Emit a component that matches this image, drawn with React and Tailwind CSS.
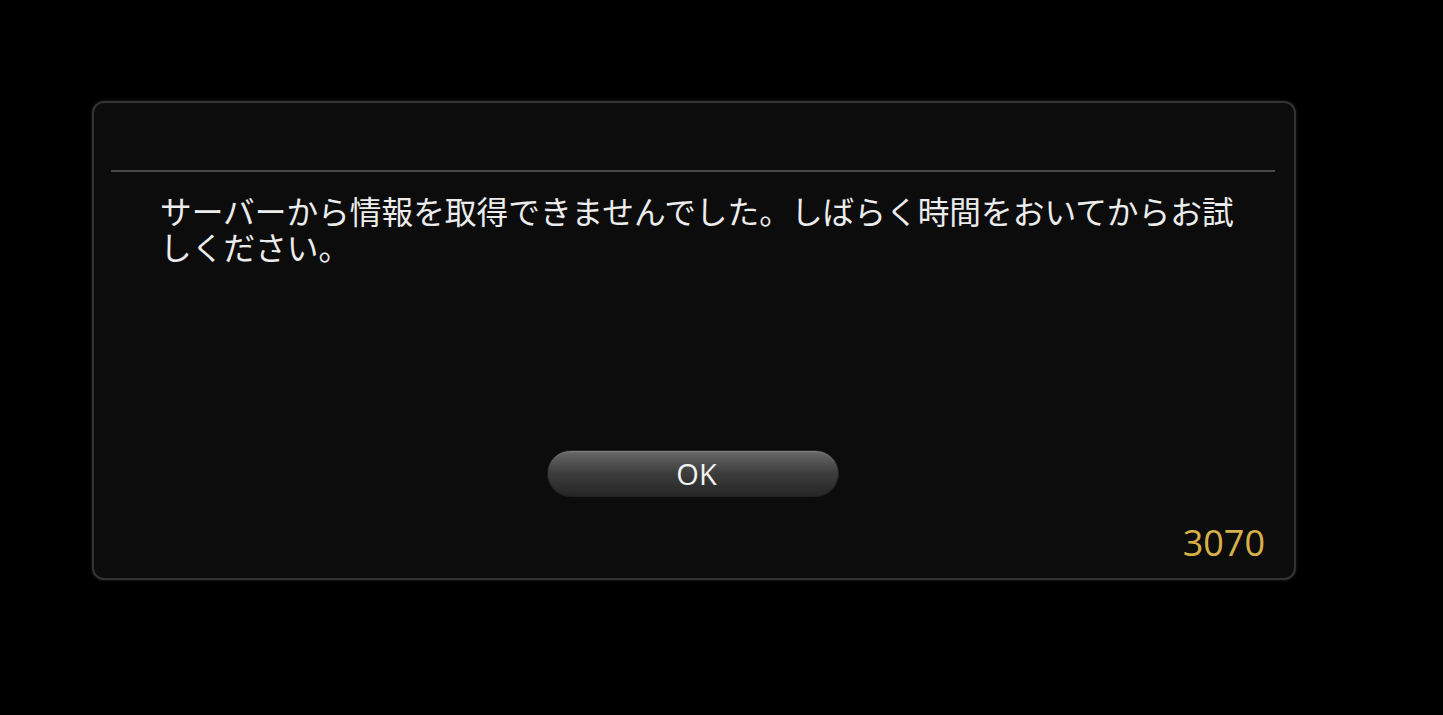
import React from "react";

const App = () => {
    return (
        <div className="w-[1443px] h-[715px] bg-black pt-[101px] pl-[92px] font-['Noto_Sans_CJK_JP','Noto_Sans',sans-serif]">
            {/* Dialog */}
            <div className="relative w-[1204px] h-[479px] bg-[#0c0c0c] border-2 border-[#333333] rounded-[12px] shadow-[0_0_3px_rgba(90,90,90,0.4)] flex flex-col">
                {/* Header divider */}
                <div className="mt-[67px] ml-[17px] mr-[19px] h-[2px] bg-[#4a4a4a]" />

                {/* Message */}
                <p className="mt-[20px] ml-[66px] w-[1095px] text-[31.7px] leading-[36px] text-[#ececec]">
                    サーバーから情報を取得できませんでした。しばらく時間をおいてからお試しください。
                </p>

                {/* OK button */}
                <div className="mt-[186px] flex justify-center">
                    <button className="ml-[-2px] pl-[7px] w-[292px] h-[47px] rounded-full border border-[#222] bg-gradient-to-b from-[#6a6a6a] via-[#3c3c3c] to-[#262626] shadow-[inset_0_1px_0_rgba(255,255,255,0.15)] text-[#f2f2f2] text-[29px] leading-none font-['Open_Sans',sans-serif] flex items-center justify-center">
                        OK
                    </button>
                </div>

                {/* Error code */}
                <div className="mt-auto mb-[17px] mr-[29px] text-right text-[36px] leading-none text-[#d8b04a] font-['Open_Sans',sans-serif]">
                    3070
                </div>
            </div>
        </div>
    );
};

export default App;
